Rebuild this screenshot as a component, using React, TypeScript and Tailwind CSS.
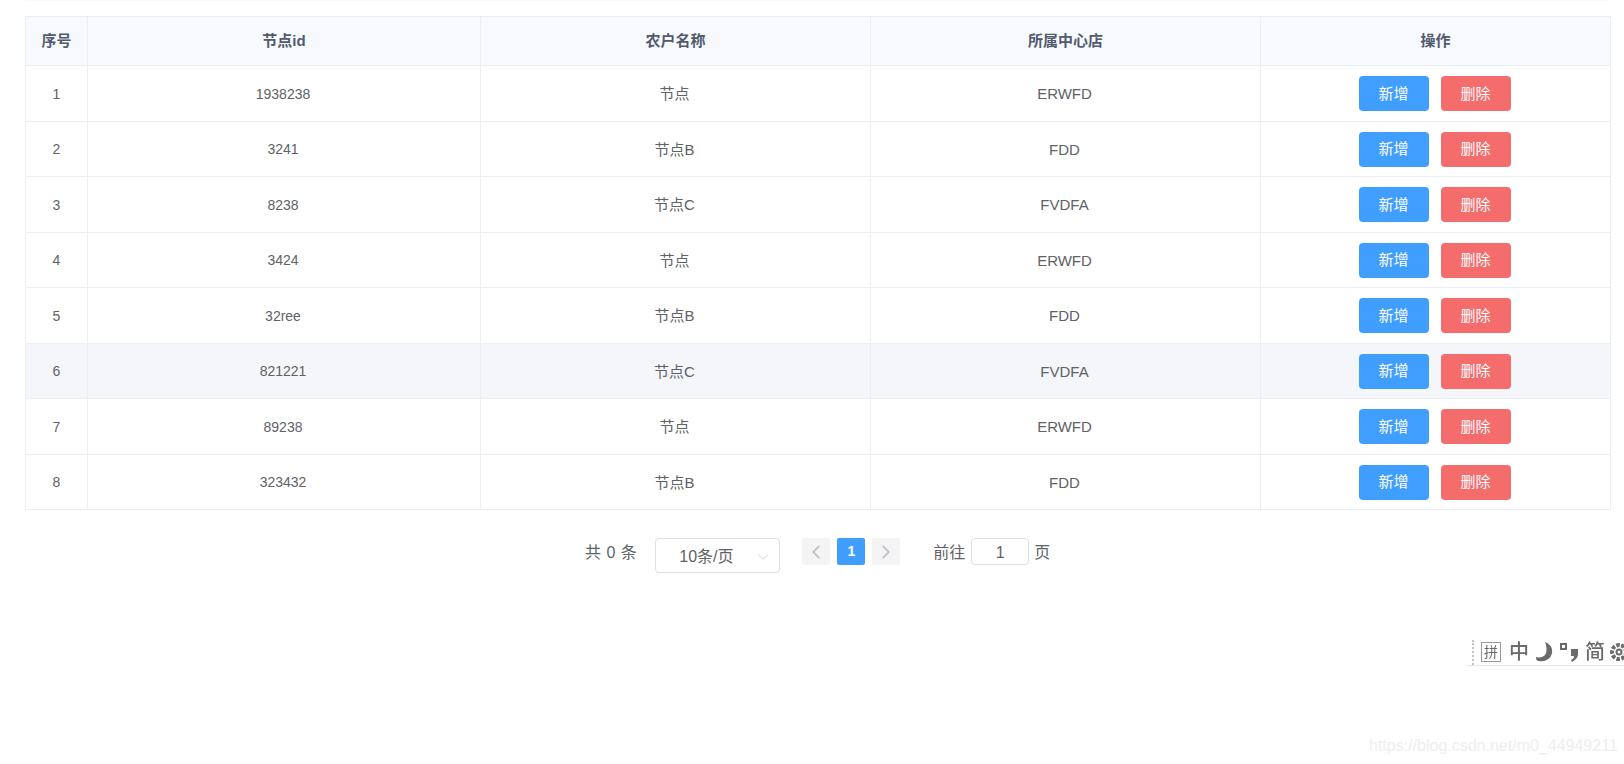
import { ChevronDown, ChevronLeft, ChevronRight } from "lucide-react";

const rows = [
  { no: 1, id: "1938238", name: "节点", store: "ERWFD" },
  { no: 2, id: "3241", name: "节点B", store: "FDD" },
  { no: 3, id: "8238", name: "节点C", store: "FVDFA" },
  { no: 4, id: "3424", name: "节点", store: "ERWFD" },
  { no: 5, id: "32ree", name: "节点B", store: "FDD" },
  { no: 6, id: "821221", name: "节点C", store: "FVDFA" },
  { no: 7, id: "89238", name: "节点", store: "ERWFD" },
  { no: 8, id: "323432", name: "节点B", store: "FDD" },
];

const headers = ["序号", "节点id", "农户名称", "所属中心店", "操作"];

function ImeToolbar() {
  // the input method bar that sits over the page in the screenshot
  return (
    <div className="absolute top-[639px] left-[1467px] flex h-[27px] w-[157px] items-center overflow-hidden border-b border-[#e8e8e8] pl-[5px] font-medium text-[#6a6a6a] blur-[0.6px]">
      <div className="h-[25px] w-[3px] shrink-0 border-l-2 border-dotted border-[#c4c4c4]" />
      <div className="ml-[6px] flex h-[20px] w-[20px] shrink-0 items-center justify-center border border-[#9a9a9a] text-[14px] leading-none font-normal">拼</div>
      <span className="ml-[8px] shrink-0 text-[20px] leading-none">中</span>
      <svg className="ml-[7px] shrink-0" width="17" height="20" viewBox="0 0 17 20" fill="#6a6a6a">
        <path d="M9 0c5 2 8 6 7 11-1 6-7 9-13 8-2 0-3-1-3-4 4 1 7 0 9-2 2-3 2-8 0-13z" />
      </svg>
      <svg className="ml-[7px] shrink-0" width="18" height="20" viewBox="0 0 18 20" fill="#6a6a6a">
        <path d="M0 1h7v7H0zM2 3v3h3V3z" fillRule="evenodd" />
        <path d="M11 7h7v5c0 4-3 6-6 8l-1-2c2-1 3-2 3-4h-3z" />
      </svg>
      <span className="ml-[7px] shrink-0 text-[20px] leading-none">简</span>
      <svg className="ml-[3px] shrink-0" width="22" height="22" viewBox="0 0 22 22" fill="none" stroke="#6a6a6a" strokeWidth="4">
        <circle cx="11" cy="11" r="7" strokeDasharray="3.500 1.500" />
        <circle cx="11" cy="11" r="2.500" strokeWidth="2" />
      </svg>
    </div>
  );
}

export default function App() {
  return (
    <div className="relative h-[764px] w-full overflow-hidden bg-white font-['Liberation_Sans','Noto_Sans_CJK_SC',sans-serif] text-[14px] text-[#606266]">
      <div className="ml-[25px] h-px w-[1586px] bg-[#fafafa]" />

      <div className="mt-[15px] ml-[25px] w-[1586px]">
        <table className="w-full table-fixed border-separate border-spacing-0 border-t border-l border-[#ebeef5] text-center">
          <colgroup>
            <col className="w-[62px]" />
            <col className="w-[393px]" />
            <col className="w-[390px]" />
            <col className="w-[390px]" />
            <col />
          </colgroup>
          <thead>
            <tr className="h-[49px] bg-[#f8f9fd]">
              {headers.map((h) => (
                <th key={h} className="border-r border-b border-[#ebeef5] text-[15px] font-bold text-[#515a6e]">
                  {h}
                </th>
              ))}
            </tr>
          </thead>
          <tbody>
            {rows.map((r) => (
              <tr key={r.no} className={r.no === 6 ? "h-[55.5px] bg-[#f5f6fa]" : "h-[55.5px]"}>
                <td className="border-r border-b border-[#ebeef5] pt-[2px]">{r.no}</td>
                <td className="border-r border-b border-[#ebeef5] pt-[2px] pr-[2px]">{r.id}</td>
                <td className="border-r border-b border-[#ebeef5] pt-[2px] pr-[2px] text-[15px]">{r.name}</td>
                <td className="border-r border-b border-[#ebeef5] pt-[2px] pr-[2px] text-[15px]">{r.store}</td>
                <td className="border-r border-b border-[#ebeef5] pt-[1px]">
                  <div className="flex justify-center gap-[12px] pr-[2px] text-[15px]">
                    <button className="h-[35px] w-[70px] rounded-[4px] bg-[#409eff] text-white">新增</button>
                    <button className="h-[35px] w-[70px] rounded-[4px] bg-[#f56c6c] text-white">删除</button>
                  </div>
                </td>
              </tr>
            ))}
          </tbody>
        </table>
      </div>

      <div className="mt-[28px] ml-[585px] flex items-start">
        <span className="mt-[4px] text-[16px] leading-[22px] tracking-[0.5px]">共 0 条</span>
        <div className="ml-[18px] flex h-[35px] w-[125px] items-center justify-between rounded-[4px] border border-[#dcdfe6] pt-[2px] pr-[7px] pl-[23px] text-[16px]">
          <span>10条/页</span>
          <ChevronDown size={18} strokeWidth={1} className="text-[#c0c4cc]" />
        </div>
        <div className="ml-[22px] flex gap-[7px]">
          <div className="flex h-[27px] w-[28px] items-center justify-center rounded-[2px] bg-[#f4f4f5] text-[#c0c4cc]">
            <ChevronLeft size={22} strokeWidth={2} />
          </div>
          <div className="flex h-[27px] w-[28px] items-center justify-center rounded-[2px] bg-[#409eff] font-bold text-white">1</div>
          <div className="flex h-[27px] w-[28px] items-center justify-center rounded-[2px] bg-[#f4f4f5] text-[#c0c4cc]">
            <ChevronRight size={22} strokeWidth={2} />
          </div>
        </div>
        <span className="mt-[4px] ml-[33px] text-[16px] leading-[22px]">前往</span>
        <div className="ml-[6px] flex h-[27px] w-[58px] items-center justify-center rounded-[4px] border border-[#dcdfe6] pt-[2px] text-[16px]">1</div>
        <span className="mt-[4px] ml-[5px] text-[16px] leading-[22px]">页</span>
      </div>

      <ImeToolbar />

      <div className="absolute top-[735px] left-[1369px] text-[16px] leading-[22px] text-[#eeeeee]">
        https://blog.csdn.net/m0_44949211
      </div>
    </div>
  );
}
